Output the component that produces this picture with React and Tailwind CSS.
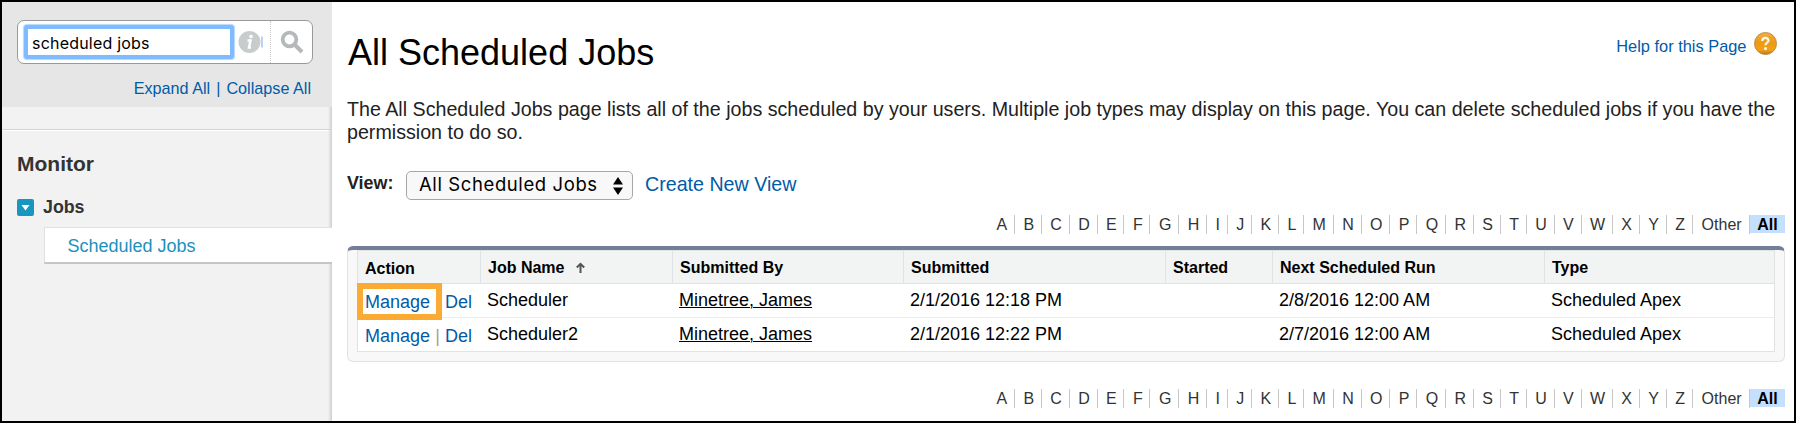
const LETTERS = "ABCDEFGHIJKLMNOPQRSTUVWXYZ".split("");

const COLUMNS = "grid-cols-[123px_192px_231px_262px_107px_272px_1fr]";
const BODY_COLUMNS = "grid-cols-[122px_192px_231px_262px_107px_272px_1fr]";

const JOBS = [
  { name: "Scheduler", by: "Minetree, James", submitted: "2/1/2016 12:18 PM", next: "2/8/2016 12:00 AM", type: "Scheduled Apex", marked: true },
  { name: "Scheduler2", by: "Minetree, James", submitted: "2/1/2016 12:22 PM", next: "2/7/2016 12:00 AM", type: "Scheduled Apex" },
];

function Rolodex() {
  return (
    <div className="flex h-[19px] justify-end text-[16px] leading-[19px] text-[#333]">
      {LETTERS.map((l) => (
        <a key={l} className="border-r border-[#c8c8c8] pr-[6.8px] pl-[8.47px]">{l}</a>
      ))}
      <a className="border-r border-[#c8c8c8] pr-[7.4px] pl-[8.8px]">Other</a>
      <a className="h-[18px] w-[35px] bg-[#c5dfff] text-center font-bold text-black">All</a>
    </div>
  );
}

function Sidebar() {
  return (
    <aside className="relative flex w-[330px] shrink-0 flex-col bg-[#f2f2f2]">
      <div className="h-[105px] bg-[#e6e6e6] pt-[18px] pl-[15px]">
        <div className="flex h-[44px] w-[296px] items-center rounded-[7px] border border-[#999] bg-white pl-[6px]">
          <div className="h-[34px] w-[210px] rounded-[3px] border-[4px] border-[#7fbcff] bg-white pl-[4px] font-[Inter,sans-serif] text-[16px] leading-[29px] text-black shadow-[0_0_1px_1px_#b5d8ff]">
            <span className="tracking-[0.2px]">scheduled jobs</span>
          </div>
          <svg className="ml-[4px] h-[24px] w-[26px]" viewBox="0 0 26 24">
            <circle cx="11.5" cy="12" r="11" fill="#c9cccd" />
            <path d="M24 6.500V17.500" fill="none" stroke="#6fa9ea" strokeWidth="1" />
            <circle cx="13" cy="6.500" r="1.800" fill="#fff" />
            <path d="M9.500 10.500H12.500L11 17.500H13" fill="none" stroke="#fff" strokeWidth="2.500" />
          </svg>
          <div className="ml-[6px] h-[42px] border-l border-dotted border-[#ccc]" />
          <svg className="ml-[9px] h-[24px] w-[24px]" viewBox="0 0 24 24" fill="none" stroke="#b5b9ba">
            <circle cx="9.500" cy="9.500" r="6.800" strokeWidth="3.800" />
            <path d="M14.500 14.500L22 22" strokeWidth="4" />
          </svg>
        </div>
        <div className="mt-[14px] flex w-[294px] justify-end gap-[6px] text-[16.2px] leading-[20px] text-[#015ba7]">
          <a>Expand All</a><span>|</span><a>Collapse All</a>
        </div>
      </div>
      <div className="flex h-[24px] flex-col justify-end">
        <div className="h-px bg-[#d4d4d4]" />
        <div className="h-px bg-white" />
      </div>
      <div className="mt-[20px] pl-[15px] text-[21px] leading-[26px] font-bold text-[#333]">Monitor</div>
      <div className="mt-[18px] flex h-[24px] items-center gap-[9px] pl-[15px] text-[17.8px] leading-[24px] font-bold text-[#333]">
        <svg className="h-[17px] w-[17px]" viewBox="0 0 17 17">
          <rect width="17" height="17" rx="2" fill="#1797c0" />
          <path d="M4.500 6H12.500L8.500 11.500Z" fill="#fff" />
        </svg>
        <span>Jobs</span>
      </div>
      <div className="relative z-10 mt-[8px] ml-[42px] h-[37px] border-t border-l border-[#e0e0e0] border-b-2 border-b-[#c6c6c6] bg-white pl-[22.5px] text-[18px] leading-[36px] text-[#1c91bd]">
        Scheduled Jobs
      </div>
      <div className="absolute top-[105px] right-0 bottom-0 w-[4px] bg-linear-to-r from-transparent to-[#cfcfcf]" />
    </aside>
  );
}

function Head({ children }) {
  return <div className="border-l border-[#e0e3e5] pl-[7px]">{children}</div>;
}

function Row({ job, last }) {
  return (
    <div className={`grid h-[34px] ${BODY_COLUMNS} border-b ${last ? "border-[#e0e3e5]" : "border-[#ececec]"} text-[18px] leading-[32px] text-black`}>
      <div className="relative pt-[2px] pl-[7px] text-[#015ba7]">
        <a>Manage</a>
        <span className="px-[5.1px] text-[#a9a08f]">|</span>
        <a>Del</a>
        {job.marked && (
          <div className="absolute -top-[1px] -left-[1px] h-[37px] w-[85px] border-[6px] border-[#fbab34]" />
        )}
        {job.marked && <div className="absolute top-[5px] left-[76px] h-[25px] w-[2px] bg-white" />}
      </div>
      <div className="pl-[7px]">{job.name}</div>
      <div className="pl-[7px]"><a className="underline decoration-1 underline-offset-1">{job.by}</a></div>
      <div className="pl-[7px]">{job.submitted}</div>
      <div />
      <div className="pl-[7px]">{job.next}</div>
      <div className="pl-[7px]">{job.type}</div>
    </div>
  );
}

export default function App() {
  return (
    <div className="flex h-[423px] w-[1796px] overflow-hidden border-2 border-black bg-white font-['Liberation_Sans',Arial,sans-serif]">
      <Sidebar />
      <main className="flex-1 pr-[9px] pl-[15px]">
        <div className="flex h-[96px] justify-between">
          <h1 className="pt-[30px] pl-[1px] text-[36px] leading-[42px] text-black">All Scheduled Jobs</h1>
          <div className="flex gap-[7.500px] pt-[30px] pr-[8px]">
            <a className="pt-[4px] text-[16.4px] leading-[20px] text-[#015ba7]">Help for this Page</a>
            <svg className="h-[23px] w-[23px]" viewBox="0 0 23 23">
              <defs>
                <linearGradient id="orb" x1="0" y1="0" x2="0" y2="1">
                  <stop offset="0" stopColor="#eeb04a" />
                  <stop offset="0.450" stopColor="#eb9a16" />
                  <stop offset="0.800" stopColor="#f3a014" />
                  <stop offset="1" stopColor="#a87a34" />
                </linearGradient>
              </defs>
              <circle cx="11.500" cy="11.500" r="11" fill="url(#orb)" stroke="#b98a3c" strokeWidth="0.900" />
              <path d="M8.300 9C8.300 5 14.500 5 14.500 8.500C14.500 10.800 11.500 10.700 11.500 13.300" fill="none" stroke="#fff8e8" strokeWidth="2.200" />
              <circle cx="11.500" cy="16.500" r="1.500" fill="#fff8e8" />
            </svg>
          </div>
        </div>
        <p className="w-[1436px] text-[19.67px] leading-[23px] text-[#222]">
          The All Scheduled Jobs page lists all of the jobs scheduled by your users. Multiple job types may display on this page. You can delete scheduled jobs if you have the permission to do so.
        </p>
        <div className="mt-[27px] flex h-[29px]">
          <b className="w-[59px] text-[17.9px] leading-[24px] text-[#222]">View:</b>
          <div className="flex w-[227px] items-center justify-between rounded-[5px] border border-[#a6a6a6] bg-[#f8f8f8] pr-[9px] pl-[12px] text-black">
            <span className="pb-[2px] font-[Inter,sans-serif] text-[18.5px] leading-[25px] tracking-[0.6px]">All Scheduled Jobs</span>
            <svg className="h-[18px] w-[10px]" viewBox="0 0 10 18"><path d="M0 7.500L5 0L10 7.500ZM0 10.500L5 18L10 10.500Z" /></svg>
          </div>
          <a className="ml-[12px] text-[19.65px] leading-[26px] text-[#015ba7]">Create New View</a>
        </div>
        <div className="mt-[15px]"><Rolodex /></div>
        <div className="mt-[12px] h-[116px] rounded-[6px] border border-t-[4px] border-[#e0e3e5] border-t-[#747e96] bg-[#f8f8f8] pr-[9px] pl-[9px]">
          <div className="border-r border-[#e0e3e5] bg-white">
            <div className={`grid h-[34px] ${COLUMNS} border-t border-b border-[#e0e3e5] bg-[#f2f3f3] text-[16px] leading-[33px] font-bold text-black`}>
              <Head><span className="relative top-px">Action</span></Head>
              <Head>
                <span className="flex items-center gap-[12px]">Job Name
                  <svg className="h-[11px] w-[9px]" viewBox="0 0 9 11" fill="none" stroke="#555" strokeWidth="2"><path d="M4.500 11V1.500M0.800 5.500L4.500 1.800L8.200 5.500" /></svg>
                </span>
              </Head>
              <Head>Submitted By</Head>
              <Head>Submitted</Head>
              <Head>Started</Head>
              <Head>Next Scheduled Run</Head>
              <Head>Type</Head>
            </div>
            <div className="border-l border-[#e0e3e5]">
              {JOBS.map((j, i) => <Row key={j.name} job={j} last={i === 1} />)}
            </div>
          </div>
        </div>
        <div className="mt-[27px]"><Rolodex /></div>
      </main>
    </div>
  );
}
